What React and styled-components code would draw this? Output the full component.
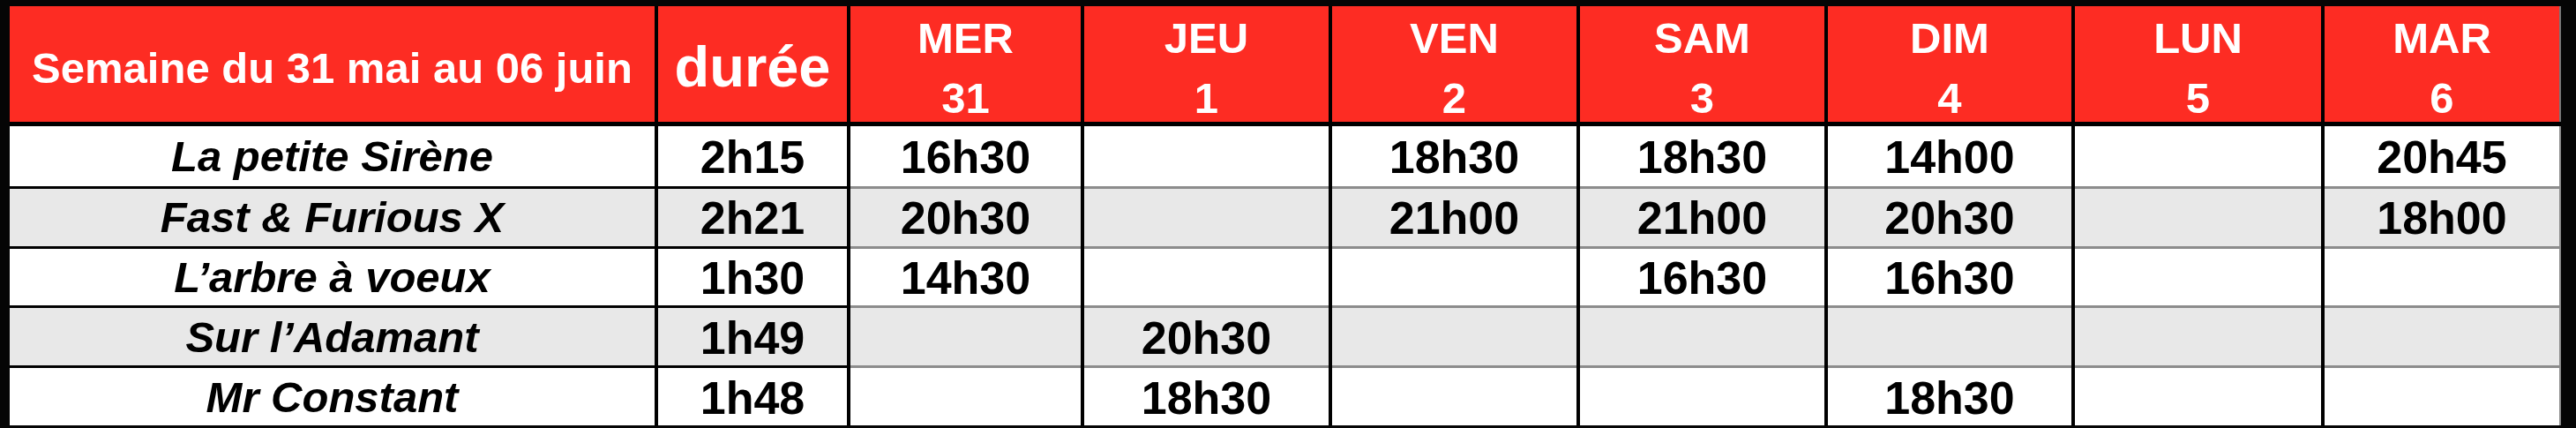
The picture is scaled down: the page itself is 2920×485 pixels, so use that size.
import React from 'react';
import styled, { createGlobalStyle } from 'styled-components';

const days = [
  { name: 'MER', num: '31' },
  { name: 'JEU', num: '1' },
  { name: 'VEN', num: '2' },
  { name: 'SAM', num: '3' },
  { name: 'DIM', num: '4' },
  { name: 'LUN', num: '5' },
  { name: 'MAR', num: '6' },
];

const films = [
  { title: 'La petite Sirène', length: '2h15', times: ['16h30', '', '18h30', '18h30', '14h00', '', '20h45'] },
  { title: 'Fast & Furious X', length: '2h21', times: ['20h30', '', '21h00', '21h00', '20h30', '', '18h00'] },
  { title: 'L’arbre à voeux', length: '1h30', times: ['14h30', '', '', '16h30', '16h30', '', ''] },
  { title: 'Sur l’Adamant', length: '1h49', times: ['', '20h30', '', '', '', '', ''] },
  { title: 'Mr Constant', length: '1h48', times: ['', '18h30', '', '', '18h30', '', ''] },
];

function App() {
  return (
    <Wrapper>
      <GlobalStyle />
      <Grid>
        <HeadCell>
          <WeekTitle>Semaine du 31 mai au 06 juin</WeekTitle>
        </HeadCell>
        <HeadCell>
          <Duree>durée</Duree>
        </HeadCell>
        {days.map((d, i) => (
          <HeadCell key={d.name} $last={i === days.length - 1}>
            <DayLabel>
              {d.name}
              <br />
              {d.num}
            </DayLabel>
          </HeadCell>
        ))}

        {films.map((f, r) => (
          <React.Fragment key={f.title}>
            <Cell $alt={r % 2 === 1} $top={r > 0} $line="#000">
              <Title>{f.title}</Title>
            </Cell>
            <Cell $alt={r % 2 === 1} $top={r > 0} $line="#000">
              <Time>{f.length}</Time>
            </Cell>
            {f.times.map((t, c) => (
              <Cell
                key={c}
                $alt={r % 2 === 1}
                $top={r > 0}
                $line="#8c8c8c"
                $last={c === f.times.length - 1}
              >
                <Time>{t}</Time>
              </Cell>
            ))}
          </React.Fragment>
        ))}
      </Grid>
    </Wrapper>
  );
}

const GlobalStyle = createGlobalStyle`
  html, body {
    margin: 0;
    padding: 0;
    background: #000;
  }
  body {
    font-family: "Liberation Sans", Arial, Helvetica, sans-serif;
  }
`;

const Wrapper = styled.div`
  width: 2920px;
  height: 485px;
  box-sizing: border-box;
  padding: 7px 17px 3px 11px;
  background: #050505;
`;

const Grid = styled.div`
  display: grid;
  height: 100%;
  grid-template-columns: 731px 214px 261px 277px 277px 277px 276px 279px 268px;
  grid-template-rows: 136px repeat(5, 1fr);
  column-gap: 4px;
  background: #000;
`;

const HeadCell = styled.div`
  background: #fd2c23;
  margin-bottom: 5px;
  display: flex;
  align-items: center;
  justify-content: center;
  color: #fff;
  font-weight: bold;
  overflow: visible;
  box-sizing: border-box;
  border-right: ${(p) => (p.$last ? '2px solid #777' : 'none')};
`;

const WeekTitle = styled.div`
  font-size: 49px;
  padding-top: 8px;
  white-space: nowrap;
`;

const Duree = styled.div`
  font-size: 65px;
  padding-top: 6px;
`;

const DayLabel = styled.div`
  font-size: 49px;
  line-height: 68px;
  text-align: center;
  align-self: flex-start;
  margin-top: 2px;
`;

const Cell = styled.div`
  background: ${(p) => (p.$alt ? '#e8e8e8' : '#fff')};
  border-top: ${(p) => (p.$top ? `3px solid ${p.$line}` : 'none')};
  border-right: ${(p) => (p.$last ? '2px solid #8c8c8c' : 'none')};
  box-sizing: border-box;
  display: flex;
  align-items: center;
  justify-content: center;
  min-height: 0;
  overflow: hidden;
`;

const Title = styled.div`
  font-size: 49px;
  font-weight: bold;
  font-style: italic;
  color: #000;
  white-space: nowrap;
`;

const Time = styled.div`
  font-size: 52px;
  font-weight: bold;
  color: #000;
  padding-top: 2px;
`;

export default App;
